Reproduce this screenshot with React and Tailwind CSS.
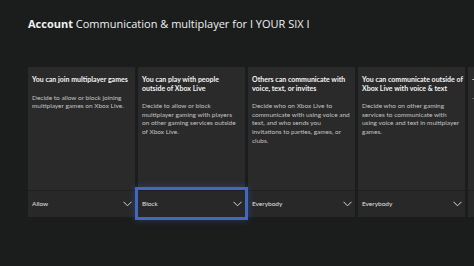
const cards = [
  {
    title: ["You can join multiplayer games"],
    body: ["Decide to allow or block joining", "multiplayer games on Xbox Live."],
    value: "Allow",
  },
  {
    title: ["You can play with people", "outside of Xbox Live"],
    body: [
      "Decide to allow or block",
      "multiplayer gaming with players",
      "on other gaming services outside",
      "of Xbox Live.",
    ],
    value: "Block",
    focused: true,
  },
  {
    title: ["Others can communicate with", "voice, text, or invites"],
    body: [
      "Decide who on Xbox Live to",
      "communicate with using voice and",
      "text, and who sends you",
      "invitations to parties, games, or",
      "clubs.",
    ],
    value: "Everybody",
  },
  {
    title: ["You can communicate outside of", "Xbox Live with voice & text"],
    body: [
      "Decide who on other gaming",
      "services to communicate with",
      "using voice and text in multiplayer",
      "games.",
    ],
    value: "Everybody",
  },
  {
    title: ["-"],
    body: ["-"],
    value: "",
  },
];

function Chevron() {
  return (
    <svg width="9" height="6" viewBox="0 0 9 6" fill="none" className="shrink-0">
      <path d="M0.5 0.8 L4.5 4.8 L8.5 0.8" stroke="#d8d8d8" strokeWidth="1" />
    </svg>
  );
}

export default function App() {
  return (
    <div
      className="h-[266px] w-[474px] overflow-hidden bg-[#1b1d1c] text-white"
      style={{ fontFamily: '"Open Sans", "Noto Sans", sans-serif' }}
    >
      <div className="pl-[28px] pt-[17px] text-[11px] leading-[14px] text-[#f0f0f0]">
        <span className="font-bold">Account</span> Communication &amp; multiplayer for I YOUR SIX I
      </div>

      <div
        className="mt-[36px] flex gap-[3px] pl-[28px]"
        style={{ fontFamily: 'Lato, "Open Sans", sans-serif' }}
      >
        {cards.map((card, i) => (
          <div key={i} className="flex h-[150px] w-[107px] shrink-0 flex-col bg-[#2a2a2a]">
            <div className="flex-1 pl-[4px] pt-[8px]">
              <p className="text-[7px] font-bold leading-[8.6px] text-[#f2f2f2]">
                {card.title.map((line) => (
                  <span key={line} className="block whitespace-nowrap">{line}</span>
                ))}
              </p>
              <p className="mt-[10px] text-[6.5px] leading-[8.6px] text-[#c2c2c2]">
                {card.body.map((line) => (
                  <span key={line} className="block whitespace-nowrap">{line}</span>
                ))}
              </p>
            </div>
            <div
              className={
                card.focused
                  ? "relative z-10 flex h-[27px] items-center justify-between border-t border-[#1f1f1f] bg-[#282828] pl-[4px] pr-[3px] outline-[3px] outline-[#4467c0] shadow-[0_0_7px_3px_rgba(60,100,200,0.4)]"
                  : "flex h-[27px] items-center justify-between border-t border-[#1f1f1f] bg-[#282828] pl-[4px] pr-[3px]"
              }
            >
              <span className="text-[6.5px] text-[#e0e0e0]">{card.value}</span>
              {card.value ? <Chevron /> : null}
            </div>
          </div>
        ))}
      </div>
    </div>
  );
}
